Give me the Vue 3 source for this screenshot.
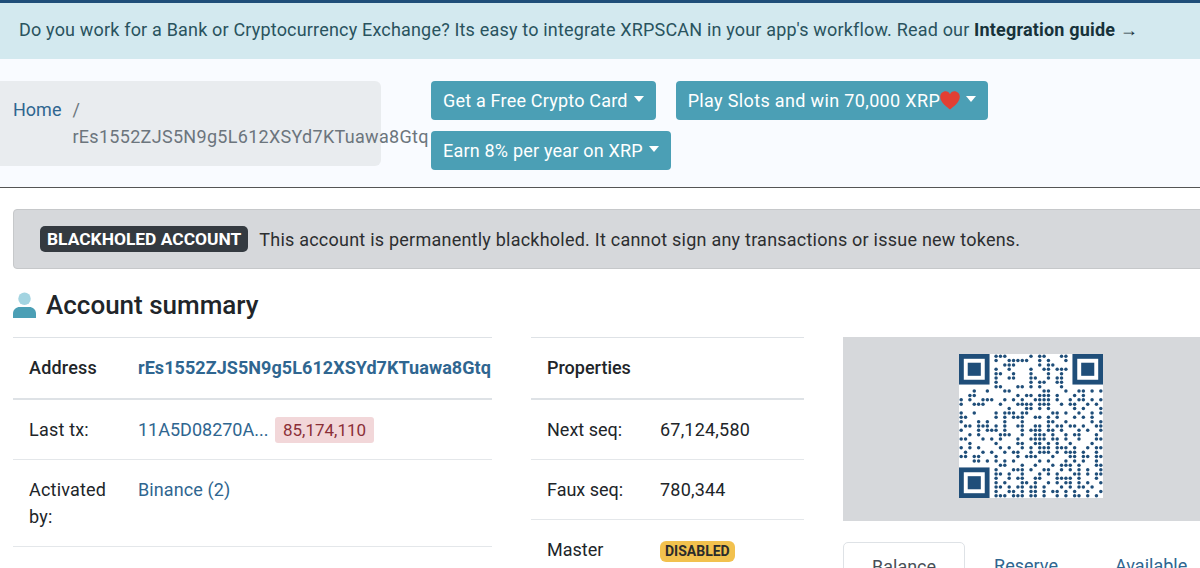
<template>
  <div class="page">
    <div class="top-alert">
      Do you work for a Bank or Cryptocurrency Exchange? Its easy to integrate XRPSCAN in your app's workflow. Read our
      <b>Integration guide</b> <span class="arrow">→</span>
    </div>

    <header class="subheader">
      <ol class="crumbs">
        <li class="crumb-home"><a>Home</a></li>
        <li class="crumb-current">rEs1552ZJS5N9g5L612XSYd7KTuawa8Gtq</li>
      </ol>
      <div class="promos">
        <button
          v-for="promo in promos"
          :key="promo.label"
          class="promo"
          :class="{ 'has-heart': promo.heart }"
        >
          {{ promo.label }}
          <svg v-if="promo.heart" class="heart" viewBox="0 0 20 19">
            <path d="M10 18.6 C8 16.6 0.2 11.8 0.2 5.8 C0.2 2.4 2.8 0.2 5.6 0.2 C7.6 0.2 9.2 1.4 10 3.2 C10.8 1.4 12.4 0.2 14.4 0.2 C17.2 0.2 19.8 2.4 19.8 5.8 C19.8 11.8 12 16.6 10 18.6 Z" fill="#e23f33" />
          </svg>
          <i class="caret"></i>
        </button>
      </div>
    </header>

    <main class="content">
      <div class="notice">
        <span class="notice-badge">BLACKHOLED ACCOUNT</span>
        <span class="notice-text">This account is permanently blackholed. It cannot sign any transactions or issue new tokens.</span>
      </div>

      <h1 class="title">
        <svg class="user-icon" viewBox="0 0 24 27">
          <circle cx="12" cy="7" r="6.5" fill="#a3d4e1" />
          <path d="M0 27 V22.5 C0 18 3.5 15.5 7 15.5 H17 C20.5 15.5 24 18 24 22.5 V27 Z" fill="#4b9fb5" />
        </svg>
        Account summary
      </h1>

      <div class="columns">
        <table class="info main-info">
          <tbody>
            <tr class="head-row">
              <th>Address</th>
              <td><a class="strong-link">rEs1552ZJS5N9g5L612XSYd7KTuawa8Gtq</a></td>
            </tr>
            <tr>
              <th>Last tx:</th>
              <td><a class="tx-link">11A5D08270A...</a> <span class="ledger">85,174,110</span></td>
            </tr>
            <tr>
              <th>Activated by:</th>
              <td><a class="binance">Binance (2)</a></td>
            </tr>
          </tbody>
        </table>

        <table class="info props">
          <tbody>
            <tr class="head-row">
              <th colspan="2">Properties</th>
            </tr>
            <tr v-for="prop in properties" :key="prop.name">
              <th>{{ prop.name }}</th>
              <td>{{ prop.value }}</td>
            </tr>
            <tr>
              <th>Master</th>
              <td><span class="disabled-badge">DISABLED</span></td>
            </tr>
          </tbody>
        </table>

        <div class="side">
          <div class="qr-panel">
            <svg class="qr" viewBox="0 0 33 33" width="144" height="144">
              <rect width="33" height="33" fill="#fff" />
              <template v-for="(row, y) in qrRows" :key="y">
                <template v-for="(cell, x) in row" :key="x">
                  <circle v-if="cell === '#' && !inFinder(x, y)" :cx="x + 0.5" :cy="y + 0.5" r="0.4" fill="#1f4e79" />
                </template>
              </template>
              <g v-for="f in finders" :key="f.x + '-' + f.y" :transform="`translate(${f.x} ${f.y})`">
                <rect width="7" height="7" fill="#1f4e79" />
                <rect x="1.1" y="1.1" width="4.8" height="4.8" fill="#fff" />
                <rect x="2" y="2" width="3" height="3" fill="#1f4e79" />
              </g>
            </svg>
          </div>
          <ul class="tabs">
            <li class="tab active">Balance</li>
            <li class="tab">Reserve</li>
            <li class="tab">Available</li>
          </ul>
        </div>
      </div>
    </main>
  </div>
</template>

<script setup>
const promos = [
  { label: "Get a Free Crypto Card" },
  { label: "Play Slots and win 70,000 XRP", heart: true },
  { label: "Earn 8% per year on XRP" },
];

const properties = [
  { name: "Next seq:", value: "67,124,580" },
  { name: "Faux seq:", value: "780,344" },
];

const finders = [
  { x: 0, y: 0 },
  { x: 26, y: 0 },
  { x: 0, y: 26 },
];

const qrRows = [
  "........###.....#.##...##........",
  "........#..#####..#.#...##.......",
  "..........###.....#.##...........",
  "........#..#....#..##.###........",
  "........##..#...#...#..#.........",
  "........#..##...##..#.##.........",
  "........#.......#.##..##.........",
  "........##...##.#.#....#.........",
  "...#..#...##.......##...#..##.#.#",
  "..##.........#.##.###.#...#.#....",
  "#.#..###..#.#.#..####.#..#.##.#.#",
  "#..###...#...####.###..#.##..#.#.",
  "...........#...##.#.#.....#.#...#",
  "#..#....#.###.##.....##.#..#..#.#",
  "##......#.#.###..##.#.#...#.#.#..",
  "#...#.#...#...#.....##..#.....#.#",
  ".##.###.#.#..##..##.#.##.##.#..##",
  "#...#.###.#...#.###.##.#...#.#..#",
  "..#.#....###..#..###.#..#.##...#.",
  "##...#.#.#...#..####.##.#..#...##",
  "..#.....#....##..##.#.#..#....#..",
  "#.#.#....#.#..#.#.###.###.#..#.##",
  ".#...#.#..#.##..#.###.#.###.#..#.",
  "##.##...#....#.###...#...##.##.##",
  "...##.#.#.#.#.....#.#...#.#.#..#.",
  "#.#.##.#.##...#..#...#.###.#...##",
  "........#...###.#..##..#.#.#.#..#",
  "........##.#..#...#.#.#...##.#.##",
  "........#..#.##..##...####.#...#.",
  "........#.#...##.#..#.#.##.#.#..#",
  "........##.#.##.##.#...#.#.##.#..",
  "........#..##.#.##.#.##.#.#..#..#",
  "........###.###.##.#..#.#.##.#.#.",
];

const inFinder = (x, y) =>
  (x < 8 && y < 8) || (x > 24 && y < 8) || (x < 8 && y > 24);
</script>

<style scoped>
.page {
  height: 568px;
  overflow: hidden;
  background: #fff;
  font-family: Roboto, "Liberation Sans", sans-serif;
  font-size: 18px;
  line-height: 27px;
  color: #212529;
}

.top-alert {
  border-top: 3px solid #1f4e79;
  background: #d3e9ef;
  color: #29535e;
  padding: 13px 19px;
  box-sizing: border-box;
  height: 59px;
  white-space: nowrap;
  letter-spacing: 0.18px;
}

.top-alert b {
  color: #17323a;
  font-weight: 700;
}

.arrow {
  color: #17323a;
  font-weight: 700;
}

.subheader {
  display: flex;
  gap: 50px;
  background: #f9fbff;
  height: 129px;
  padding-top: 22px;
  box-sizing: border-box;
  border-bottom: 1px solid #555;
}

.crumbs {
  list-style: none;
  display: flex;
  margin: 0;
  width: 381px;
  height: 85px;
  box-sizing: border-box;
  padding: 15px 0 0 13px;
  background: #e9ecef;
  border-radius: 0 6px 6px 0;
  flex-shrink: 0;
}

.crumb-home a {
  color: #2f6690;
}

.crumb-home {
  flex-shrink: 0;
}

.crumb-current {
  min-width: 0;
  color: #6c757d;
  padding-left: 11px;
  letter-spacing: 0.3px;
}

.crumb-current::before {
  content: "/";
  display: block;
}

.promos {
  display: flex;
  flex-wrap: wrap;
  align-content: flex-start;
  gap: 11px 20px;
  width: 620px;
}

.promo {
  display: flex;
  align-items: center;
  height: 39px;
  padding: 0 12px;
  border: 0;
  border-radius: 4px;
  background: #4b9fb5;
  color: #fff;
  font: inherit;
  letter-spacing: 0.2px;
}

.promo.has-heart {
  letter-spacing: 0.35px;
}

.heart {
  width: 20px;
  height: 19px;
  margin-left: 0;
}

.caret {
  display: inline-block;
  margin-left: 6px;
  margin-bottom: 3px;
  border-top: 6px solid #fff;
  border-left: 5px solid transparent;
  border-right: 5px solid transparent;
}

.content {
  padding: 21px 0 0 13px;
}

.notice {
  display: flex;
  align-items: center;
  gap: 11px;
  height: 60px;
  box-sizing: border-box;
  margin-right: -8px;
  padding-left: 26px;
  background: #d6d8db;
  border: 1px solid #c6c8ca;
  border-radius: 4px;
}

.notice-badge {
  background: #343a40;
  color: #fff;
  font-size: 17.4px;
  font-weight: 700;
  line-height: 26px;
  padding: 0 7px;
  border-radius: 5px;
}

.notice-text {
  letter-spacing: 0.23px;
  color: #2c2e30;
}

.title {
  display: flex;
  align-items: center;
  gap: 10px;
  margin: 19px 0 15px;
  font-size: 26px;
  line-height: 34px;
  font-weight: 500;
}

.user-icon {
  width: 23px;
  height: 26px;
}

.columns {
  display: flex;
  align-items: flex-start;
}

.info {
  border-collapse: collapse;
  border-top: 1px solid #dee2e6;
  flex-shrink: 0;
}

.info th {
  font-weight: 400;
  text-align: left;
  vertical-align: top;
}

.info th,
.info td {
  padding: 16px;
  border-bottom: 1px solid #e4e7ea;
  vertical-align: top;
}

.head-row th,
.head-row td {
  border-bottom: 2px solid #dee2e6;
  height: 61px;
  box-sizing: border-box;
  font-weight: 500;
}

.info a {
  color: #2f6690;
}

.main-info {
  width: 479px;
  margin-right: 39px;
  table-layout: fixed;
}

.main-info th {
  width: 109px;
  box-sizing: border-box;
  letter-spacing: 0.2px;
}

.main-info td {
  white-space: nowrap;
}

.strong-link {
  font-weight: 700;
  letter-spacing: 0.06px;
}

.tx-link {
  letter-spacing: 0;
}

.binance {
  letter-spacing: 0.1px;
}

.ledger {
  margin-left: 2px;
  padding: 3px 8px;
  background: #f2d7d9;
  color: #8b2f37;
  border-radius: 3px;
  font-size: 17px;
  line-height: 20px;
}

.props {
  width: 273px;
  margin-right: 39px;
}

.props th {
  width: 81px;
}

.props td {
  letter-spacing: 0.2px;
}

.disabled-badge {
  display: inline-block;
  background: #f2c14e;
  color: #2b2b2b;
  font-size: 14px;
  font-weight: 700;
  line-height: 21px;
  padding: 0 5px;
  border-radius: 6px;
  letter-spacing: 0;
}

.side {
  width: 376px;
  flex-shrink: 0;
}

.qr-panel {
  display: flex;
  justify-content: center;
  background: #d6d8db;
  height: 184px;
  padding-top: 17px;
  box-sizing: border-box;
}

.tabs {
  list-style: none;
  display: flex;
  margin: 21px 0 0;
  padding: 0;
  color: #2f6690;
}

.tab {
  padding: 10px 28px 6px;
  margin-left: 1px;
  white-space: nowrap;
}

.tab.active {
  margin-left: 0;
  color: #495057;
  border: 1px solid #dee2e6;
  border-radius: 5px 5px 0 0;
}
</style>

<style>
html,
body {
  margin: 0;
  overflow: hidden;
}
</style>
